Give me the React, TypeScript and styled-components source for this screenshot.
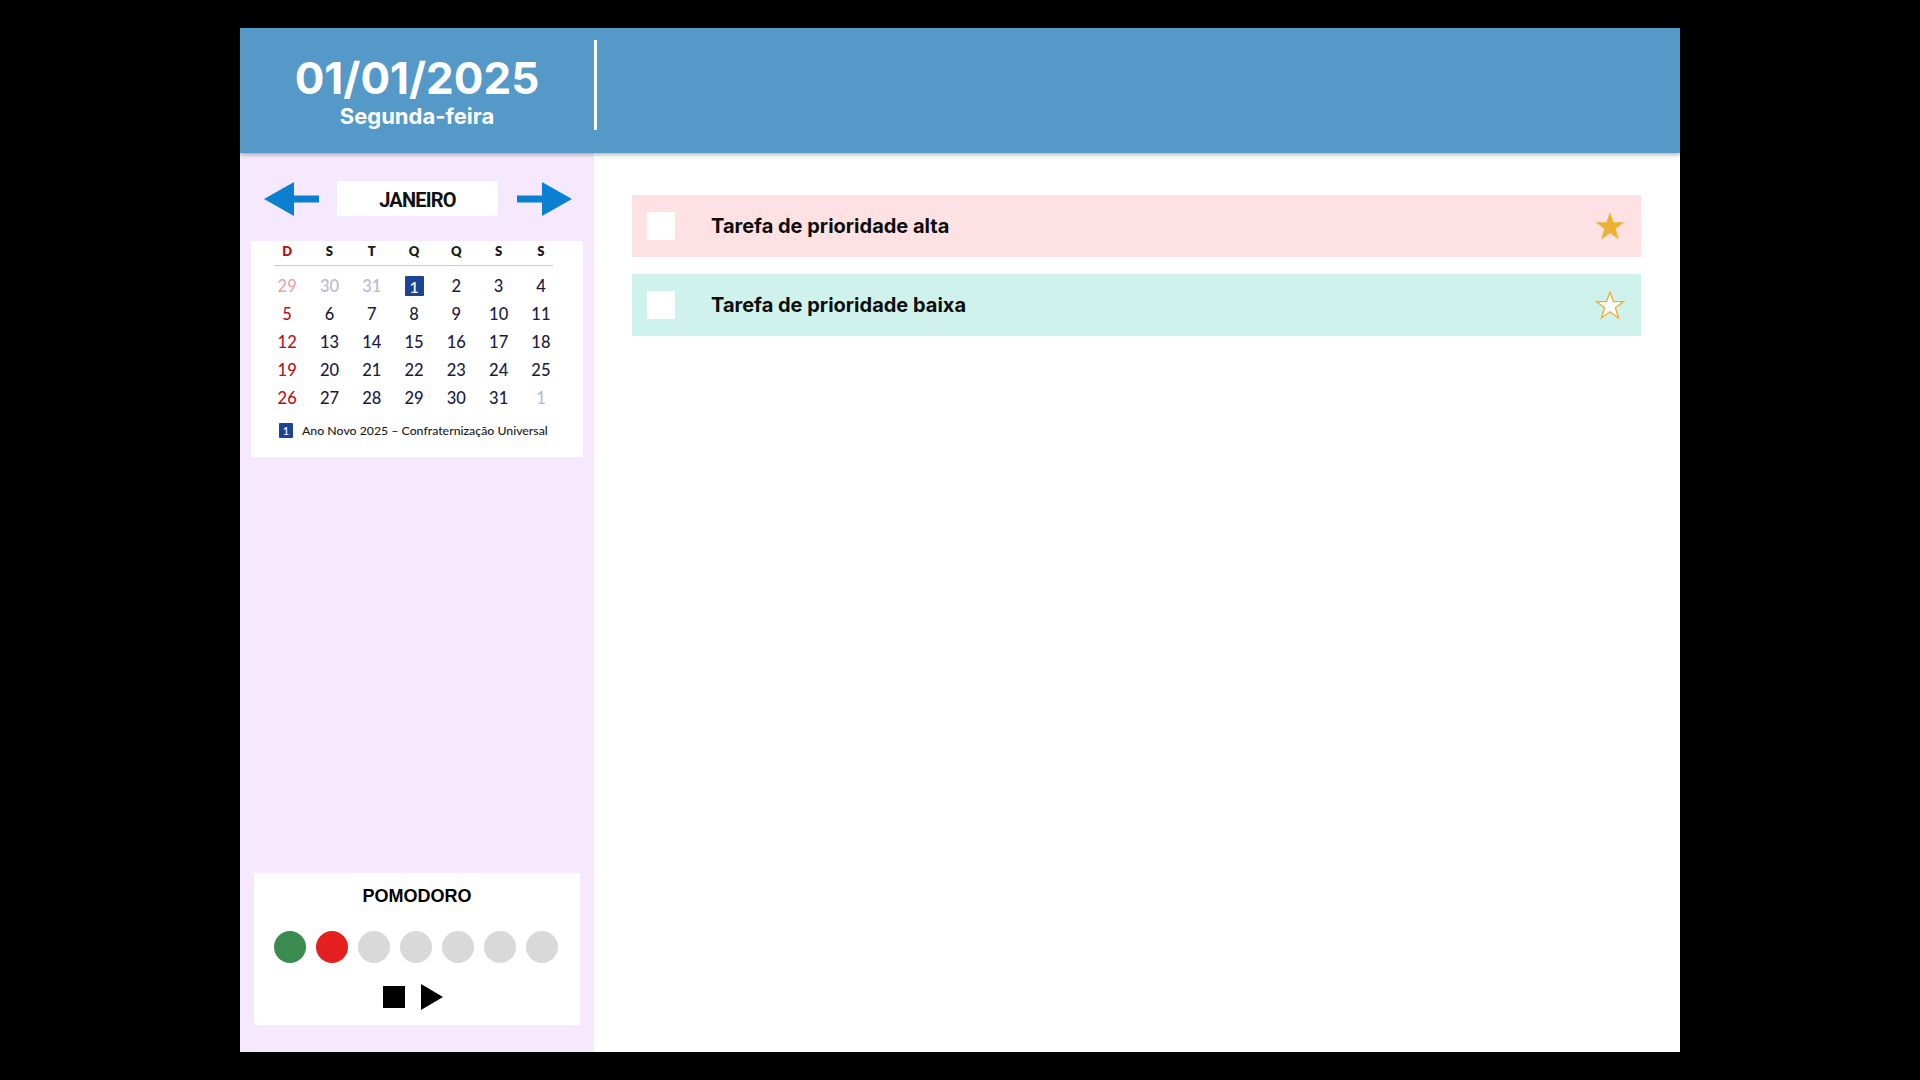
import React from "react";
import styled, { createGlobalStyle } from "styled-components";

const GlobalStyle = createGlobalStyle`
  html, body { margin: 0; padding: 0; background: #000; }
  body { font-family: "Inter", "Liberation Sans", sans-serif; }
  * { box-sizing: border-box; }
`;

const Page = styled.div`
  width: 1920px;
  height: 1080px;
  background: #000;
  display: flex;
  justify-content: center;
  padding-top: 28px;
`;

const Frame = styled.div`
  width: 1440px;
  height: 1024px;
  display: flex;
  flex-direction: column;
  background: #fff;
`;

const Header = styled.header`
  height: 125px;
  flex: none;
  background: #5499c7;
  display: flex;
  align-items: flex-start;
  position: relative;
  z-index: 1;
  box-shadow: 0 2px 4px rgba(0, 0, 0, 0.28);
`;

const DateBlock = styled.div`
  width: 354px;
  padding-top: 28px;
  text-align: center;
  color: #fff;
  font-family: "Inter", sans-serif;
  font-weight: 700;
`;

const DateText = styled.div`
  font-size: 44px;
  line-height: 44px;
`;

const WeekdayText = styled.div`
  font-size: 22px;
  line-height: 22px;
  margin-top: 5px;
`;

const HeaderDivider = styled.div`
  width: 3px;
  height: 90px;
  margin-top: 12px;
  background: #fff;
`;

const Body = styled.div`
  flex: 1;
  display: flex;
  min-height: 0;
`;

const Sidebar = styled.aside`
  width: 354px;
  flex: none;
  background: #f6e9fe;
  display: flex;
  flex-direction: column;
  padding: 28px 0 27px 0;
`;

const MonthNav = styled.div`
  display: flex;
  align-items: center;
  padding-left: 24px;
  height: 35px;
`;

const ArrowButton = styled.button`
  width: 55px;
  height: 34px;
  padding: 0;
  border: none;
  background: transparent;
  display: flex;
  cursor: pointer;
`;

const MonthLabel = styled.div`
  width: 161px;
  height: 35px;
  margin: 0 19px 0 18px;
  background: #fff;
  display: flex;
  align-items: center;
  justify-content: center;
  padding-top: 2px;
  font-family: "Roboto", "Liberation Sans", sans-serif;
  font-weight: 700;
  font-size: 20px;
  letter-spacing: -0.8px;
  color: #111;
`;

const CalendarCard = styled.div`
  width: 332px;
  height: 216px;
  margin: 25px 0 0 11px;
  background: #fff;
  padding: 0 0 0 15px;
  font-family: "Lato", "Noto Sans", sans-serif;
`;

const WeekHeader = styled.div`
  display: grid;
  grid-template-columns: repeat(7, 42.3px);
  width: 296px;
  height: 24px;
  padding-bottom: 4px;
  align-items: center;
`;

const HeaderRule = styled.div`
  width: 279px;
  height: 1px;
  margin-left: 8px;
  background: #c8c8d0;
`;

const WeekDay = styled.div<{ $sunday?: boolean }>`
  text-align: center;
  font-size: 13px;
  font-weight: 800;
  color: ${(p) => (p.$sunday ? "#b5121b" : "#1a1a1a")};
`;

const DaysGrid = styled.div`
  display: grid;
  grid-template-columns: repeat(7, 42.3px);
  grid-auto-rows: 28px;
  width: 296px;
  padding-top: 6px;
`;

type DayTone = "sunday" | "normal" | "prevSunday" | "faded";

const toneColor: Record<DayTone, string> = {
  sunday: "#b5121b",
  normal: "#1b1a45",
  prevSunday: "#e9a3aa",
  faded: "#b9b8cd",
};

const DayCell = styled.div<{ $tone: DayTone }>`
  display: flex;
  align-items: center;
  justify-content: center;
  font-size: 16.5px;
  font-weight: 500;
  color: ${(p) => toneColor[p.$tone]};
`;

const HolidayMark = styled.span<{ $size: number; $font: number }>`
  display: inline-flex;
  align-items: center;
  justify-content: center;
  width: ${(p) => p.$size}px;
  height: ${(p) => p.$size + 1}px;
  background: #1b4592;
  color: #fff;
  font-size: ${(p) => p.$font}px;
  font-weight: 500;
  border-radius: 1px;
`;

const Legend = styled.div`
  display: flex;
  align-items: center;
  gap: 9px;
  margin: 11px 0 0 13px;
  font-size: 12.3px;
  font-weight: 500;
  color: #1a1a1a;
`;

const PomodoroCard = styled.div`
  margin: auto 14px 0 14px;
  height: 152px;
  background: #fff;
  display: flex;
  flex-direction: column;
  align-items: center;
  padding-top: 12px;
`;

const PomodoroTitle = styled.div`
  font-family: "Liberation Sans", Arial, sans-serif;
  font-weight: 700;
  font-size: 18px;
  line-height: 22px;
  color: #000;
`;

const Dots = styled.div`
  display: flex;
  gap: 10px;
  margin-top: 24px;
  padding-right: 2px;
`;

const Dot = styled.div<{ $color: string }>`
  width: 32px;
  height: 32px;
  border-radius: 50%;
  background: ${(p) => p.$color};
`;

const Controls = styled.div`
  display: flex;
  align-items: center;
  gap: 16px;
  margin-top: 21px;
  padding-right: 8px;
`;

const StopButton = styled.div`
  width: 22px;
  height: 22px;
  background: #000;
`;

const PlayButton = styled.div`
  width: 0;
  height: 0;
  border-top: 13px solid transparent;
  border-bottom: 13px solid transparent;
  border-left: 22px solid #000;
`;

const Main = styled.main`
  flex: 1;
  padding: 42px 39px 0 38px;
  display: flex;
  flex-direction: column;
  gap: 17px;
`;

const TaskRow = styled.div<{ $bg: string }>`
  height: 62px;
  background: ${(p) => p.$bg};
  display: flex;
  align-items: center;
  padding: 0 16px 0 15px;
`;

const CheckBox = styled.div`
  width: 28px;
  height: 28px;
  background: #fff;
  flex: none;
`;

const TaskTitle = styled.div`
  flex: 1;
  margin-left: 36px;
  font-family: "Inter", sans-serif;
  font-weight: 700;
  font-size: 20px;
  color: #0d0d0d;
`;

const ArrowIcon = ({ dir }: { dir: "left" | "right" }) => (
  <svg width="55" height="34" viewBox="0 0 55 34">
    {dir === "left" ? (
      <polygon points="0,17 30,0 30,13.5 55,13.5 55,20.5 30,20.5 30,34" fill="#0b80d1" />
    ) : (
      <polygon points="55,17 25,0 25,13.5 0,13.5 0,20.5 25,20.5 25,34" fill="#0b80d1" />
    )}
  </svg>
);

const StarIcon = ({ filled }: { filled: boolean }) => (
  <svg width="30" height="29" viewBox="0 0 30 29">
    <polygon
      points="15,1 18.4,10.6 28.6,10.6 20.4,16.8 23.5,27 15,20.8 6.5,27 9.6,16.8 1.4,10.6 11.6,10.6"
      fill={filled ? "#ecb032" : "#ffffff"}
      stroke="#ecb032"
      strokeWidth={filled ? 0.5 : 1.4}
      strokeLinejoin="miter"
    />
  </svg>
);

type Day = { n: number; tone: DayTone; holiday?: boolean };

const days: Day[] = [
  { n: 29, tone: "prevSunday" },
  { n: 30, tone: "faded" },
  { n: 31, tone: "faded" },
  { n: 1, tone: "normal", holiday: true },
  ...[2, 3, 4].map((n) => ({ n, tone: "normal" as DayTone })),
  ...Array.from({ length: 27 }, (_, i) => {
    const n = i + 5;
    return { n, tone: (i % 7 === 0 ? "sunday" : "normal") as DayTone };
  }),
  { n: 1, tone: "faded" },
];

const weekDays = ["D", "S", "T", "Q", "Q", "S", "S"];

export default function App() {
  return (
    <>
      <GlobalStyle />
      <Page>
        <Frame>
          <Header>
            <DateBlock>
              <DateText>01/01/2025</DateText>
              <WeekdayText>Segunda-feira</WeekdayText>
            </DateBlock>
            <HeaderDivider />
          </Header>
          <Body>
            <Sidebar>
              <MonthNav>
                <ArrowButton aria-label="Mês anterior">
                  <ArrowIcon dir="left" />
                </ArrowButton>
                <MonthLabel>JANEIRO</MonthLabel>
                <ArrowButton aria-label="Próximo mês">
                  <ArrowIcon dir="right" />
                </ArrowButton>
              </MonthNav>
              <CalendarCard>
                <WeekHeader>
                  {weekDays.map((d, i) => (
                    <WeekDay key={i} $sunday={i === 0}>
                      {d}
                    </WeekDay>
                  ))}
                </WeekHeader>
                <HeaderRule />
                <DaysGrid>
                  {days.map((d, i) => (
                    <DayCell key={i} $tone={d.tone}>
                      {d.holiday ? (
                        <HolidayMark $size={19} $font={16}>
                          {d.n}
                        </HolidayMark>
                      ) : (
                        d.n
                      )}
                    </DayCell>
                  ))}
                </DaysGrid>
                <Legend>
                  <HolidayMark $size={14} $font={11}>
                    1
                  </HolidayMark>
                  Ano Novo 2025 – Confraternização Universal
                </Legend>
              </CalendarCard>
              <PomodoroCard>
                <PomodoroTitle>POMODORO</PomodoroTitle>
                <Dots>
                  <Dot $color="#398b50" />
                  <Dot $color="#e31f1f" />
                  <Dot $color="#d9d9d9" />
                  <Dot $color="#d9d9d9" />
                  <Dot $color="#d9d9d9" />
                  <Dot $color="#d9d9d9" />
                  <Dot $color="#d9d9d9" />
                </Dots>
                <Controls>
                  <StopButton />
                  <PlayButton />
                </Controls>
              </PomodoroCard>
            </Sidebar>
            <Main>
              <TaskRow $bg="#fee1e2">
                <CheckBox />
                <TaskTitle>Tarefa de prioridade alta</TaskTitle>
                <StarIcon filled />
              </TaskRow>
              <TaskRow $bg="#d0f2ec">
                <CheckBox />
                <TaskTitle>Tarefa de prioridade baixa</TaskTitle>
                <StarIcon filled={false} />
              </TaskRow>
            </Main>
          </Body>
        </Frame>
      </Page>
    </>
  );
}
